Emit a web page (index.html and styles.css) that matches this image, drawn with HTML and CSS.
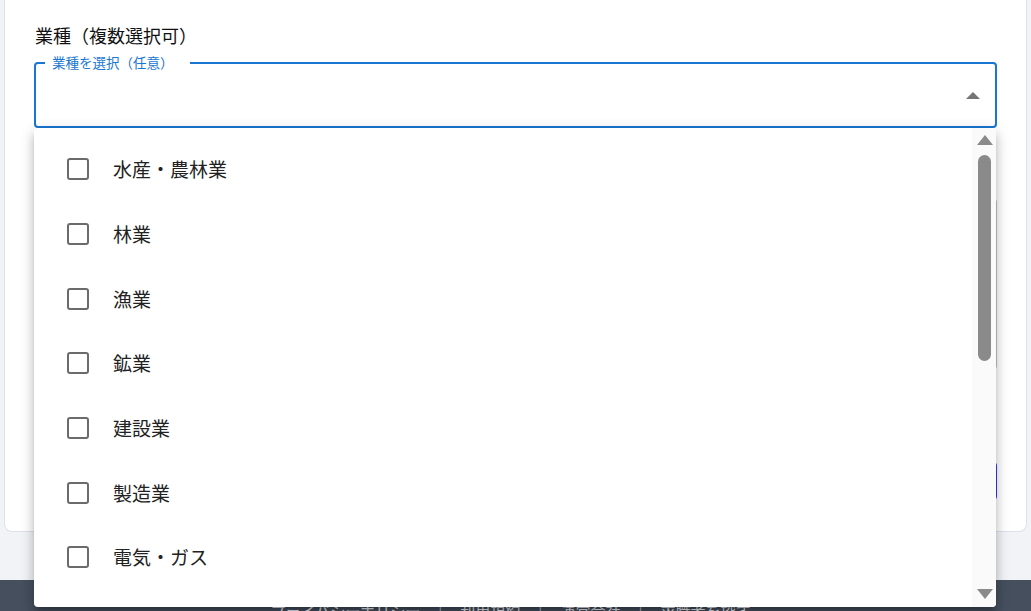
FILE: index.html
```html
<!DOCTYPE html>
<html lang="ja">
<head>
<meta charset="utf-8">
<title>業種選択</title>
<link rel="stylesheet" href="styles.css">
</head>
<body>
<div class="page">
  <section class="card">
    <h2 class="field-title">業種（複数選択可）</h2>
    <div class="select-wrap">
      <div class="select-box">
        <span class="select-label">業種を選択（任意）</span>
        <svg class="select-arrow" width="14" height="7" viewBox="0 0 14 7"><polygon points="0,7 7,0 14,7" fill="#757575"/></svg>
      </div>
      <div class="menu">
        <ul class="menu-list">
          <li class="menu-item"><span class="check"></span><span class="item-text">水産・農林業</span></li>
          <li class="menu-item"><span class="check"></span><span class="item-text">林業</span></li>
          <li class="menu-item"><span class="check"></span><span class="item-text">漁業</span></li>
          <li class="menu-item"><span class="check"></span><span class="item-text">鉱業</span></li>
          <li class="menu-item"><span class="check"></span><span class="item-text">建設業</span></li>
          <li class="menu-item"><span class="check"></span><span class="item-text">製造業</span></li>
          <li class="menu-item"><span class="check"></span><span class="item-text">電気・ガス</span></li>
          <li class="menu-item"><span class="check"></span><span class="item-text">情報通信業</span></li>
        </ul>
        <div class="scrollbar">
          <svg class="sb-arrow" width="16" height="10" viewBox="0 0 16 10"><polygon points="0,10 8,0 16,10" fill="#8a8a8a"/></svg>
          <div class="sb-track"><div class="sb-thumb"></div></div>
          <svg class="sb-arrow" width="16" height="10" viewBox="0 0 16 10"><polygon points="0,0 16,0 8,10" fill="#8a8a8a"/></svg>
        </div>
      </div>
    </div>
    <div class="textarea"></div>
    <button class="submit">この条件で検索する</button>
  </section>
</div>
<footer class="footer">
  <nav class="footer-links">
    <a>プライバシーポリシー</a><span class="sep">|</span>
    <a>利用規約</a><span class="sep">|</span>
    <a>運営会社</a><span class="sep">|</span>
    <a>求職者を探す</a>
  </nav>
</footer>
</body>
</html>
```

FILE: styles.css
```css
* { box-sizing: border-box; }
html, body { margin: 0; padding: 0; }
body {
  background: #f1f3f6;
  font-family: "Noto Sans CJK JP", "Noto Sans", sans-serif;
  color: rgba(0,0,0,0.87);
  height: 611px;
  overflow: hidden;
}
.page {
  padding: 0 4px;
}
.card {
  background: #fff;
  border: 1px solid #dde2ea;
  border-top: none;
  border-radius: 0 0 8px 8px;
  padding: 22px 29px 31px 29px;
  height: 532px;
}
.field-title {
  margin: 0 0 14px 1px;
  font-size: 18px;
  line-height: 26px;
  font-weight: 400;
  color: #111;
}
.select-wrap {
  position: relative;
}
.select-box {
  position: relative;
  height: 66px;
  border: 2px solid #1976d2;
  border-radius: 4px;
}
.select-label {
  position: absolute;
  left: 9px;
  top: -11px;
  background: #fff;
  padding: 0 16px 0 7px;
  font-size: 13.5px;
  line-height: 18px;
  color: #1976d2;
}
.select-arrow {
  position: absolute;
  right: 15px;
  top: 28px;
}
.menu {
  position: absolute;
  left: 0;
  top: 66px;
  width: 962px;
  height: 479px;
  background: #fff;
  border-radius: 4px;
  box-shadow: 0 5px 5px -3px rgba(0,0,0,0.2), 0 8px 10px 1px rgba(0,0,0,0.14), 0 3px 14px 2px rgba(0,0,0,0.12);
  display: flex;
  overflow: hidden;
  z-index: 10;
}
.menu-list {
  flex: 1;
  list-style: none;
  margin: 0;
  padding: 9px 0 0;
}
.menu-item {
  height: 64.67px;
  display: flex;
  align-items: center;
  padding-left: 33px;
}
.check {
  width: 22px;
  height: 22px;
  border: 2.5px solid #6b6b6b;
  border-radius: 3px;
  flex: none;
}
.item-text {
  margin-left: 24px;
  font-size: 19px;
  line-height: 28px;
  color: #222;
}
.scrollbar {
  width: 24px;
  background: #fafafa;
  display: flex;
  flex-direction: column;
  align-items: center;
  padding: 7px 0 8px;
}
.sb-arrow {
  flex: none;
  margin-left: 1px;
}
.sb-track {
  flex: 1;
  width: 100%;
  padding: 10px 0 0 6px;
}
.sb-thumb {
  width: 13px;
  height: 206px;
  background: #8a8a8a;
  border-radius: 7px;
}
.textarea {
  margin-top: 70px;
  height: 172px;
  border: 1px solid #c4c4c4;
  border-radius: 4px;
}
.submit {
  display: block;
  width: 100%;
  margin-top: 92px;
  height: 38px;
  border: none;
  border-radius: 4px;
  background: #3b3bdc;
  color: #fff;
  font-family: inherit;
  font-size: 15px;
}
.footer {
  margin-top: 48px;
  background: #454f5e;
  height: 60px;
  padding-top: 20px;
}
.footer-links {
  display: flex;
  justify-content: center;
  gap: 18px;
  padding-right: 10px;
  font-size: 15px;
  color: #e8ebef;
}
.sep { color: #b8bec8; }
```
